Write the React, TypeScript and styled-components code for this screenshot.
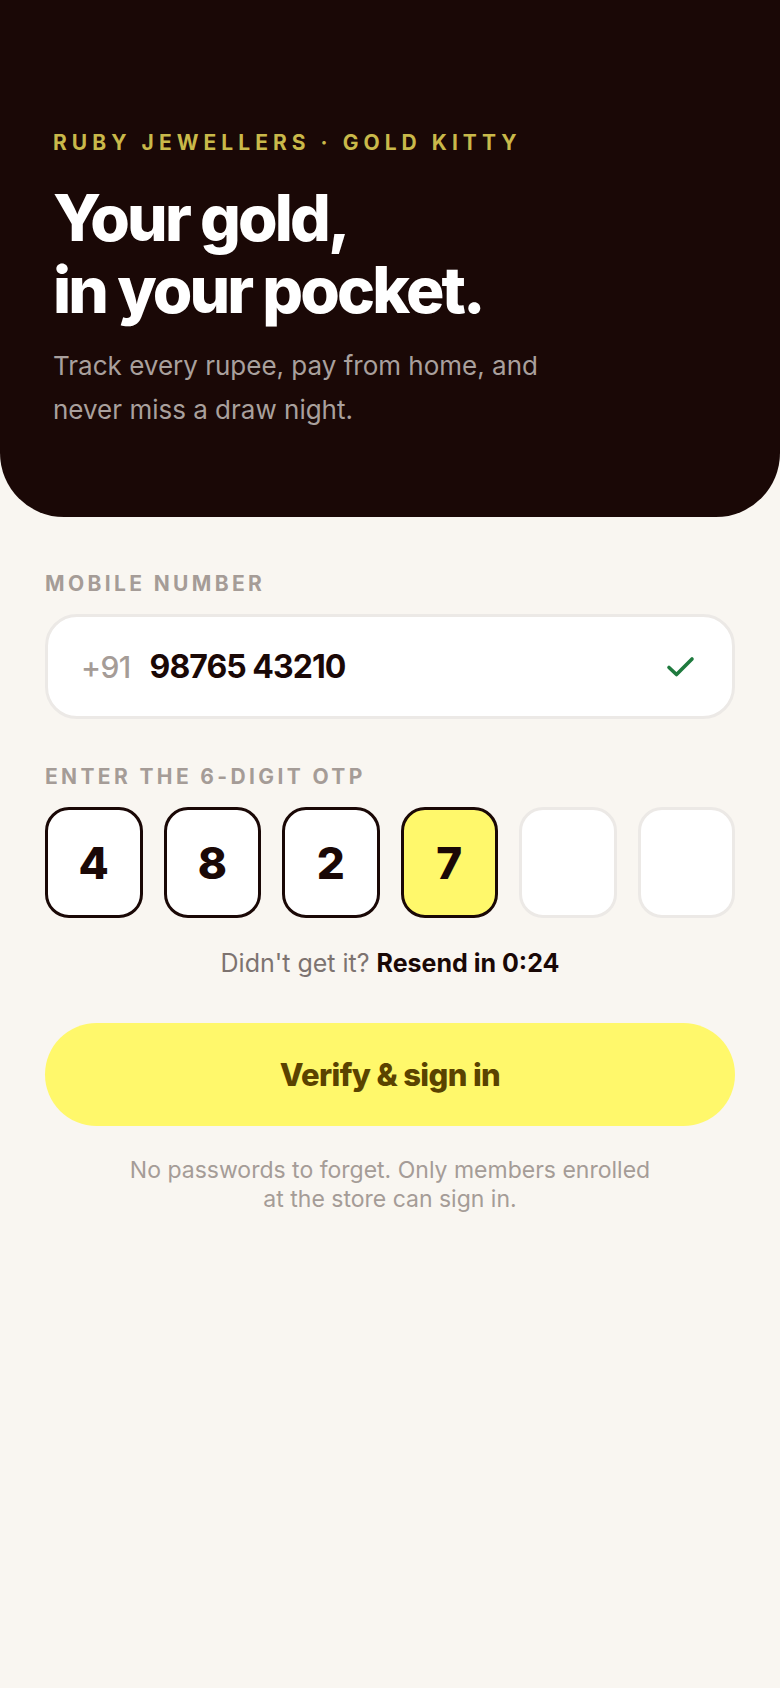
import React from 'react'
import styled, { createGlobalStyle } from 'styled-components'

const GlobalStyle = createGlobalStyle`
  html, body {
    margin: 0;
    padding: 0;
    background: #f9f6f1;
  }
  body {
    font-family: Inter, "Noto Sans", sans-serif;
    -webkit-font-smoothing: antialiased;
  }
  * { box-sizing: border-box; }
`

const Page = styled.div`
  width: 780px;
  min-height: 1688px;
  background: #f9f6f1;
`

const Hero = styled.header`
  height: 517px;
  background: #1a0806;
  border-radius: 0 0 64px 64px;
  padding: 131px 53px 0 53px;
`

const Eyebrow = styled.div`
  font-size: 21px;
  font-weight: 700;
  letter-spacing: 0.24em;
  color: #c9b94a;
  line-height: 24px;
`

const Headline = styled.h1`
  margin: 27px 0 0 0;
  font-size: 64px;
  font-weight: 800;
  letter-spacing: -0.045em;
  line-height: 72px;
  color: #ffffff;
`

const Lede = styled.p`
  margin: 18px 0 0 0;
  font-size: 26px;
  font-weight: 400;
  letter-spacing: 0;
  line-height: 44px;
  color: #a9a09d;
  max-width: 530px;
`

const Form = styled.main`
  padding: 55px 45px 0 45px;
  display: flex;
  flex-direction: column;
`

const FieldLabel = styled.label`
  display: block;
  font-size: 21px;
  font-weight: 700;
  letter-spacing: 0.16em;
  color: #a59c97;
  line-height: 24px;
`

const PhoneField = styled.div`
  margin-top: 18px;
  height: 105px;
  background: #ffffff;
  border: 3px solid #ece9e6;
  border-radius: 32px;
  display: flex;
  align-items: center;
  padding: 0 36px 0 33px;
  gap: 19px;
`

const Prefix = styled.span`
  font-size: 30px;
  font-weight: 500;
  color: #a59c97;
  letter-spacing: -0.02em;
`

const PhoneNumber = styled.span`
  flex: 1;
  font-size: 32px;
  font-weight: 700;
  color: #1a0806;
  letter-spacing: -0.03em;
`

const OtpLabel = styled(FieldLabel)`
  margin-top: 46px;
`

const OtpRow = styled.div`
  margin-top: 18px;
  display: grid;
  grid-template-columns: repeat(6, 1fr);
  gap: 21px;
`

const OtpCell = styled.div<{ $filled: boolean; $active: boolean }>`
  height: 111px;
  border-radius: 24px;
  border: 3px solid ${({ $filled }) => ($filled ? '#1a0806' : '#ece9e6')};
  background: ${({ $active }) => ($active ? '#fff86b' : '#ffffff')};
  display: flex;
  align-items: center;
  justify-content: center;
  font-size: 44px;
  font-weight: 800;
  color: #1a0806;
`

const Resend = styled.p`
  margin: 30px 0 0 0;
  text-align: center;
  font-size: 25px;
  line-height: 30px;
  color: #7d7370;
  letter-spacing: 0;
  b {
    color: #1a0806;
    font-weight: 700;
  }
`

const VerifyButton = styled.button`
  margin-top: 45px;
  height: 103px;
  width: 100%;
  border: none;
  border-radius: 52px;
  background: #fff86b;
  color: #5a4300;
  font-family: inherit;
  font-size: 31px;
  font-weight: 800;
  letter-spacing: -0.02em;
  cursor: pointer;
`

const Note = styled.p`
  margin: 30px auto 0 auto;
  max-width: 530px;
  text-align: center;
  font-size: 23px;
  line-height: 29px;
  color: #a59c97;
  letter-spacing: 0;
`

function CheckIcon() {
  return (
    <svg width="30" height="24" viewBox="0 0 30 24" fill="none">
      <path d="M3 12.5 L10.5 19.5 L26 4" stroke="#1f7a3e" strokeWidth="3.6" strokeLinecap="round" strokeLinejoin="round" />
    </svg>
  )
}

const OTP = ['4', '8', '2', '7', '', '']

export default function App() {
  return (
    <Page>
      <GlobalStyle />
      <Hero>
        <Eyebrow>RUBY JEWELLERS · GOLD KITTY</Eyebrow>
        <Headline>
          Your gold,
          <br />
          in your pocket.
        </Headline>
        <Lede>Track every rupee, pay from home, and never miss a draw night.</Lede>
      </Hero>
      <Form>
        <FieldLabel>MOBILE NUMBER</FieldLabel>
        <PhoneField>
          <Prefix>+91</Prefix>
          <PhoneNumber>98765 43210</PhoneNumber>
          <CheckIcon />
        </PhoneField>

        <OtpLabel>ENTER THE 6-DIGIT OTP</OtpLabel>
        <OtpRow>
          {OTP.map((d, i) => (
            <OtpCell key={i} $filled={d !== ''} $active={i === 3}>
              {d}
            </OtpCell>
          ))}
        </OtpRow>

        <Resend>
          Didn't get it? <b>Resend in 0:24</b>
        </Resend>

        <VerifyButton>Verify &amp; sign in</VerifyButton>

        <Note>No passwords to forget. Only members enrolled at the store can sign in.</Note>
      </Form>
    </Page>
  )
}
